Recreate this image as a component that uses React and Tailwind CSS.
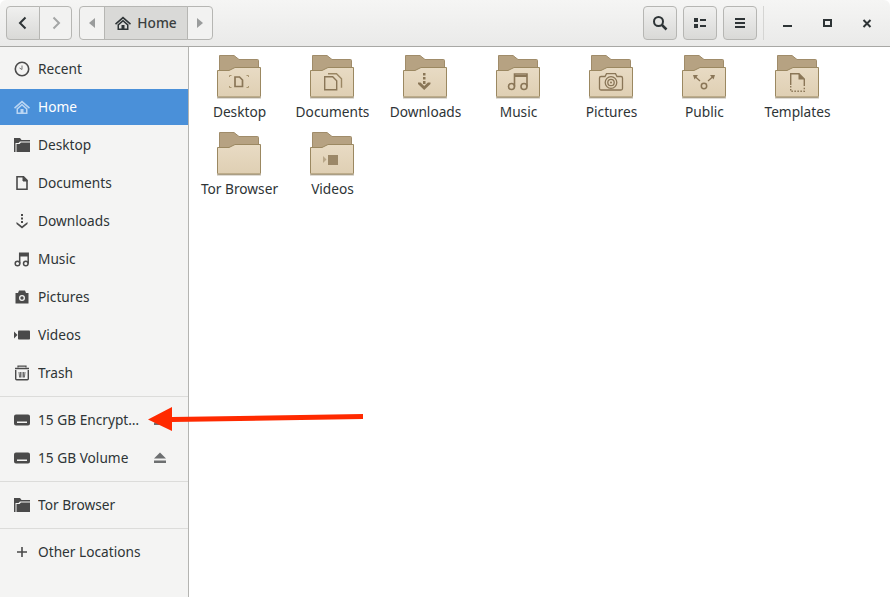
const font = "font-['Noto_Sans','Open_Sans',sans-serif]";

// symbolic icons, drawn on a 16x16 box
const Clock = () => (
  <svg width="16" height="16" viewBox="0 0 16 16" fill="none" stroke="#4a4a4a">
    <circle cx="8" cy="8" r="6.7" strokeWidth="1.6" />
    <path d="M8 4.500V8.500L5.500 7" strokeWidth="1" stroke="#777" />
  </svg>
);
const House = ({ color = "#2e3436" }) => (
  <svg width="16" height="16" viewBox="0 0 16 16" fill={color}>
    <path d="M8 1.500L0 8.600l1 1.200L8 3.700l7 6.100 1-1.200z" />
    <path fillRule="evenodd" d="M2.500 9.500L8 4.800l5.500 4.700V15h-11zM4 10.300V13.500h2.500v-3.500h3v3.500H12v-3.200L8 6.800z" />
  </svg>
);
const FolderIcon = () => (
  <svg width="16" height="16" viewBox="0 0 16 16" fill="#4a4a4a">
    <path d="M0 1h6l1.500 2H16v1.500H6L4.500 6H1.500v9H0z" />
    <path d="M2.500 7h3L7 5.500h9V15H2.500z" />
  </svg>
);
const Doc = () => (
  <svg width="16" height="16" viewBox="0 0 16 16" fill="none" stroke="#4a4a4a" strokeWidth="1.600">
    <path d="M3 1.800h6.500L13 5.300v9H3z" />
    <path d="M9 1.500V6h4.500" fill="#4a4a4a" strokeWidth="1" />
  </svg>
);
const Down = () => (
  <svg width="16" height="16" viewBox="0 0 16 16" fill="#4a4a4a">
    <rect x="7" y="1" width="2" height="2" />
    <rect x="7" y="4.500" width="2" height="2" />
    <rect x="7" y="8" width="2" height="2" />
    <path d="M2.500 9L8 13.200 13.500 9v2L8 15.500 2.500 11z" />
  </svg>
);
const Note = () => (
  <svg width="16" height="16" viewBox="0 0 16 16" fill="none" stroke="#4a4a4a" strokeWidth="1.500">
    <circle cx="3.500" cy="12.500" r="2.300" />
    <circle cx="11.800" cy="12.500" r="2.300" />
    <path d="M5.700 12.500V2.300H14.200V12.500" />
    <path d="M6 3h8v2.500H6z" fill="#4a4a4a" stroke="none" />
  </svg>
);
const Camera = () => (
  <svg width="16" height="16" viewBox="0 0 16 16" fill="#4a4a4a">
    <path fillRule="evenodd" d="M5 1.500h6L12 4h2.500v10.500h-13V4H4zM8 6a3 3 0 1 0 0 6 3 3 0 0 0 0-6z" />
    <circle cx="8" cy="9" r="1.700" />
  </svg>
);
const Video = () => (
  <svg width="16" height="16" viewBox="0 0 16 16" fill="#4a4a4a">
    <path d="M0 4.500L3.500 8 0 11.500z" />
    <rect x="4" y="3.500" width="12" height="9" rx="0.800" />
  </svg>
);
const Trash = () => (
  <svg width="16" height="16" viewBox="0 0 16 16" fill="none" stroke="#4a4a4a" strokeWidth="1.200">
    <path d="M1 3.500h14" strokeWidth="1.500" />
    <path d="M4 2.500V1.200h8v1.300" />
    <path d="M1.700 5v8.800c0 .6.500 1 1 1h10.600c.5 0 1-.4 1-1V5" strokeWidth="1.400" />
    <path d="M5 7l.6 5.500M8 7v5.500M11 7l-.6 5.500M6.500 7v5.500M9.500 7v5.500" strokeWidth="0.800" />
  </svg>
);
const Drive = () => (
  <svg width="16" height="16" viewBox="0 0 16 16">
    <path fillRule="evenodd" fill="#4a4a4a" d="M2 2.500h12a2 2 0 0 1 2 2v7a2 2 0 0 1-2 2H2a2 2 0 0 1-2-2v-7a2 2 0 0 1 2-2zM3 9.500v1.500h10V9.500z" />
  </svg>
);
const Eject = () => (
  <svg width="14" height="14" viewBox="0 0 14 14" fill="#6d6f70">
    <path d="M7 1.500L13 7.500H1z" />
    <rect x="1" y="9.500" width="12" height="2.500" />
  </svg>
);
const Plus = () => (
  <svg width="16" height="16" viewBox="0 0 16 16" fill="#4a4a4a">
    <path d="M7.200 3h1.600v4.200H13v1.600H8.800V13H7.200V8.800H3V7.200h4.200z" />
  </svg>
);

const sideTop = [
  ["Recent", Clock],
  ["Home", House],
  ["Desktop", FolderIcon],
  ["Documents", Doc],
  ["Downloads", Down],
  ["Music", Note],
  ["Pictures", Camera],
  ["Videos", Video],
  ["Trash", Trash],
];

const Row = ({ label, Icon, active, eject }) => (
  <div className={`my-px h-9 shrink-0 flex items-center pl-[14px] pr-[21px] ${active ? "bg-[#4a90d9] text-white" : "text-[#2e3436]"}`}>
    <span className="w-[24px] shrink-0 flex">
      {active ? <Icon color="#b9d5f3" /> : <Icon />}
    </span>
    <span className={`flex-1 min-w-0 truncate ${eject ? "mr-[9px]" : ""}`}>{label}</span>
    {eject && <span className="shrink-0 flex"><Eject /></span>}
  </div>
);

const Sep = () => <div className="my-1 h-px shrink-0 bg-[#dcdcda]" />;

// emblems on the folder's front, in the box of the folder
const ink = "#8a7657";
const emblems = {
  Desktop: (
    <g fill="none" stroke={ink}>
      <path d="M13.500 22v-1.500h2M13.500 31v1.500h2M30.500 20.500h2V22M30.500 32.500h2V31" strokeWidth="1" stroke="#a8946f" />
      <path d="M19 22h4.500l3 3v6.500H19z" strokeWidth="1.700" />
    </g>
  ),
  Documents: (
    <g fill="none" stroke={ink} strokeWidth="1.400">
      <path d="M15.700 21.700h8l4 4v9h-12z" />
      <path d="M19 18.700h8.500l5 5v9" stroke="#9a8663" />
    </g>
  ),
  Downloads: (
    <g fill={ink}>
      <rect x="21" y="18" width="2.500" height="2.500" />
      <rect x="21" y="22" width="2.500" height="2.500" />
      <rect x="21" y="26" width="2.500" height="3" />
      <path d="M16 27.500h2.500l3.700 3.500 3.700-3.500h2.600v1.500l-6.300 6-6.200-6z" />
    </g>
  ),
  Music: (
    <g fill="none" stroke={ink} strokeWidth="1.600">
      <circle cx="16.500" cy="31.500" r="3" />
      <circle cx="29" cy="31.500" r="3" />
      <path d="M19.500 31.500V19h12.500v12.500" />
      <path d="M19.500 21h12.500" strokeWidth="2" />
    </g>
  ),
  Pictures: (
    <g fill="none" stroke={ink} strokeWidth="1.300">
      <path d="M11.500 23c0-1 .7-1.500 1.500-1.500h4L18.500 18.700h9L29 21.500h4c.8 0 1.500.5 1.500 1.500v10.500c0 1-.7 1.500-1.500 1.500H13c-.8 0-1.500-.5-1.500-1.500z" />
      <circle cx="23" cy="27.500" r="5.800" />
      <circle cx="23" cy="27.500" r="3.200" />
      <circle cx="23" cy="27.500" r="1" fill={ink} stroke="none" />
    </g>
  ),
  Public: (
    <g fill={ink} stroke={ink}>
      <circle cx="23" cy="31" r="2.700" fill="none" strokeWidth="1.500" />
      <path d="M14.500 22l4.500 4M31.500 22l-4.500 4" strokeWidth="1.300" />
      <path d="M12 20h5l-3.500 4.500zM34 20h-5l3.500 4.500z" stroke="none" />
    </g>
  ),
  Templates: (
    <g fill="none" stroke={ink}>
      <path d="M16.700 30V18.700H25l5.300 5.300v7" strokeWidth="1.400" />
      <path d="M16.700 31v5.300H30.300V32" strokeWidth="1.400" strokeDasharray="1.500 1.500" />
      <path d="M24.500 18.500V24.500h6" fill={ink} stroke="none" />
    </g>
  ),
  "Tor Browser": null,
  Videos: (
    <g fill="#9c8868">
      <path d="M14 24l3.500 3.500L14 31z" opacity="0.600" />
      <rect x="19" y="23" width="10" height="10" />
    </g>
  ),
};

const FolderBig = ({ name }) => (
  <svg width="45" height="44" viewBox="1 0 45 44" className="block">
    <defs>
      <linearGradient id="front" x1="0" y1="0" x2="0" y2="1">
        <stop offset="0" stopColor="#e8dbc4" />
        <stop offset="1" stopColor="#dfcfb3" />
      </linearGradient>
    </defs>
    <path d="M3.500 0.500H18l5 4h18.500a1 1 0 0 1 1 1V16H3.500z" fill="#b6a282" stroke="#a08c6a" strokeWidth="1" />
    <path d="M1.500 15.500H13L19 12.500H44.500V41a1 1 0 0 1-1 1H2.500a1 1 0 0 1-1-1z" fill="url(#front)" stroke="#9b8861" strokeWidth="1" />
    <rect x="1" y="42" width="44" height="1.500" fill="#8e8064" opacity="0.550" />
    {emblems[name]}
  </svg>
);

const items = ["Desktop", "Documents", "Downloads", "Music", "Pictures", "Public", "Templates", "Tor Browser", "Videos"];

const btn = "h-[34px] flex items-center justify-center border border-[#b6b6b3]";
const raised = "bg-gradient-to-b from-[#f0f0ef] to-[#d9d9d7]";

export default function App() {
  return (
    <div className={`relative w-[890px] h-[597px] overflow-hidden flex flex-col bg-white text-[13.7px] ${font}`}>
      {/* Header bar */}
      <header className="h-[47px] shrink-0 flex items-center pl-[6px] pr-[6px] rounded-t-[6px] border-b border-[#a8a8a5] bg-gradient-to-b from-[#f5f5f4] to-[#eaeae9]">
        <div className="flex">
          <button className={`${btn} ${raised} w-[34px] rounded-l-[4px]`}>
            <svg width="16" height="16" viewBox="0 0 16 16" fill="none" stroke="#2e3436" strokeWidth="2"><path d="M10.500 2.500L5 8l5.500 5.500" /></svg>
          </button>
          <button className={`${btn} w-[33px] -ml-px rounded-r-[4px] bg-[#f2f2f1]`}>
            <svg width="16" height="16" viewBox="0 0 16 16" fill="none" stroke="#a4a6a6" strokeWidth="2"><path d="M5.500 2.500L11 8l-5.500 5.500" /></svg>
          </button>
        </div>
        <div className="flex ml-[7px]">
          <button className={`${btn} w-[26px] rounded-l-[4px] bg-[#f2f2f1]`}>
            <svg width="8" height="12" viewBox="0 0 8 12" fill="#9a9c9c"><path d="M7 1v10L1 6z" /></svg>
          </button>
          <button className={`${btn} w-[84px] -ml-px bg-[#d9d9d7] font-medium gap-[6px]`}>
            <House />
            <span className="text-[#3b3f40]">Home</span>
          </button>
          <button className={`${btn} w-[26px] -ml-px rounded-r-[4px] bg-[#f2f2f1]`}>
            <svg width="8" height="12" viewBox="0 0 8 12" fill="#9a9c9c"><path d="M1 1v10l6-5z" /></svg>
          </button>
        </div>
        <div className="ml-auto flex items-center">
          <button className={`${btn} ${raised} w-[34px] rounded-[4px]`}>
            <svg width="16" height="16" viewBox="0 0 16 16" fill="none" stroke="#2e3436"><circle cx="6.500" cy="6.500" r="4.500" strokeWidth="2" /><path d="M10 10l4.500 4.500" strokeWidth="2.500" /></svg>
          </button>
          <button className={`${btn} ${raised} w-[34px] rounded-[4px] ml-[6px]`}>
            <svg width="16" height="16" viewBox="0 0 16 16" fill="#2e3436"><rect x="2" y="3" width="4" height="4" /><rect x="2" y="9" width="4" height="4" /><rect x="8" y="4" width="6" height="2" /><rect x="8" y="10" width="6" height="2" /></svg>
          </button>
          <button className={`${btn} ${raised} w-[34px] rounded-[4px] ml-[6px]`}>
            <svg width="16" height="16" viewBox="0 0 16 16" fill="#2e3436"><rect x="3" y="3" width="10" height="2" /><rect x="3" y="7" width="10" height="2" /><rect x="3" y="11" width="10" height="2" /></svg>
          </button>
          <div className="w-px h-[34px] bg-[#d5d5d3] ml-[6px] mr-[6px]" />
          <div className="flex">
            <span className="w-[34px] h-[34px] flex items-center justify-center">
              <svg width="16" height="16" viewBox="0 0 16 16" fill="#2e3436"><rect x="4" y="10" width="9" height="2" /></svg>
            </span>
            <span className="ml-[6px] w-[34px] h-[34px] flex items-center justify-center">
              <svg width="16" height="16" viewBox="0 0 16 16" fill="none" stroke="#2e3436" strokeWidth="2"><rect x="5" y="5" width="7" height="6" /></svg>
            </span>
            <span className="ml-[6px] w-[34px] h-[34px] flex items-center justify-center">
              <svg width="16" height="16" viewBox="0 0 16 16" fill="none" stroke="#2e3436" strokeWidth="2"><path d="M4.500 5l7 7M11.500 5l-7 7" /></svg>
            </span>
          </div>
        </div>
      </header>

      <div className="flex-1 flex min-h-0">
        {/* Sidebar */}
        <aside className="w-[189px] shrink-0 pt-[3px] flex flex-col bg-[#f4f4f3] border-r border-[#b4b4b1]">
          {sideTop.map(([label, Icon]) => (
            <Row key={label} label={label} Icon={Icon} active={label === "Home"} />
          ))}
          <Sep />
          <Row label="15 GB Encrypted" Icon={Drive} eject />
          <Row label="15 GB Volume" Icon={Drive} eject />
          <Sep />
          <Row label="Tor Browser" Icon={FolderIcon} />
          <Sep />
          <Row label="Other Locations" Icon={Plus} />
        </aside>

        {/* Files */}
        <main className="flex-1 pl-[4px] pt-[8px]">
          <div className="grid grid-cols-[repeat(7,93px)] auto-rows-[77px]">
            {items.map((name) => (
              <div key={name} className="flex flex-col items-center text-[#2e3436]">
                <FolderBig name={name} />
                <span className="mt-[3px] leading-[19px] whitespace-nowrap">{name}</span>
              </div>
            ))}
          </div>
        </main>
      </div>

      {/* Red annotation arrow over the sidebar */}
      <svg className="absolute left-0 top-0 pointer-events-none" width="890" height="597" viewBox="0 0 890 597">
        <path d="M148 419.500L172 407V417L363 414V419L172 422V431z" fill="#ff2a00" />
      </svg>
    </div>
  );
}
